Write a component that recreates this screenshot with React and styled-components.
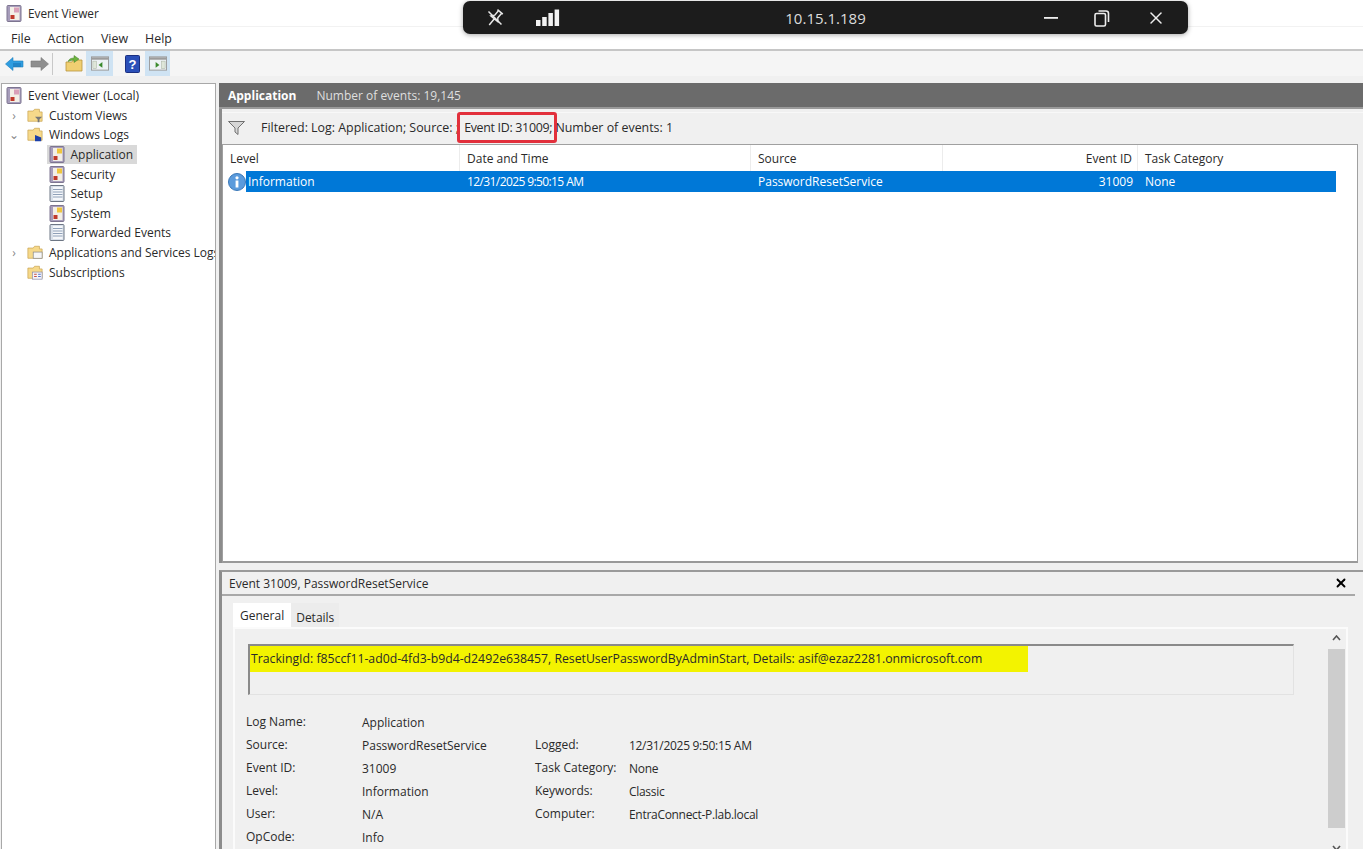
import React from "react";
import styled, { createGlobalStyle } from "styled-components";
import { X } from "lucide-react";

const GlobalStyle = createGlobalStyle`
  html, body { margin: 0; padding: 0; background: #f0f0f0; }
  body { font-family: "Open Sans", "Noto Sans", "Liberation Sans", sans-serif; font-size: 12px; color: #2a2a2a; }
  * { box-sizing: border-box; }
`;

const Window = styled.div`
  position: relative;
  width: 1363px;
  height: 849px;
  overflow: hidden;
  display: flex;
  flex-direction: column;
  background: #f0f0f0;
`;

const TitleBar = styled.div`
  height: 26px;
  background: #fff;
  display: flex;
  align-items: center;
  gap: 6px;
  padding-left: 6px;
  font-size: 11.8px;
`;

const MenuBar = styled.div`
  height: 25px;
  background: #fff;
  border-top: 1px solid #f2f2f2;
  border-bottom: 2px solid #c6c6c6;
  display: flex;
  align-items: center;
  padding-left: 11px;
  gap: 17px;
`;

const MenuItem = styled.span`
  font-size: 12.4px;
`;

const ToolBar = styled.div`
  height: 25px;
  background: #f5f5f5;
  display: flex;
  align-items: center;
  padding-left: 5px;
`;

const ToolButton = styled.div`
  width: ${({ $w }) => $w || 24}px;
  height: 25px;
  margin-right: ${({ $gap }) => $gap || 0}px;
  display: flex;
  align-items: center;
  justify-content: center;
  background: ${({ $on }) => ($on ? "#cfe3f3" : "transparent")};
`;

const ToolSep = styled.div`
  width: 1px;
  height: 22px;
  background: #c8c8c8;
  margin: 0 8px 0 3px;
`;

const ConnectionBar = styled.div`
  position: absolute;
  left: 463px;
  top: 1px;
  width: 725px;
  height: 33px;
  background: #1c1c1c;
  border-radius: 7px;
  box-shadow: 0 1px 5px rgba(0, 0, 0, 0.35);
  color: #e8e8e8;
  display: grid;
  grid-template-columns: 1fr auto 1fr;
  align-items: center;
`;

const ConnGroup = styled.div`
  display: flex;
  align-items: center;
  padding-left: ${({ $left }) => $left || 0}px;
  justify-content: ${({ $end }) => ($end ? "flex-end" : "flex-start")};
  padding-right: ${({ $right }) => $right || 0}px;
  gap: ${({ $gap }) => $gap}px;
`;

const ConnAddress = styled.span`
  font-size: 15px;
  color: #dcdcdc;
`;

const Main = styled.div`
  flex: 1;
  min-height: 0;
  margin-top: 7px;
  display: flex;
  gap: 3px;
  padding-left: 1px;
`;

const TreePane = styled.div`
  width: 215px;
  background: #fff;
  border: 1px solid #a8a8a8;
  border-bottom: none;
  padding-top: 2px;
  overflow: hidden;
`;

const TreeRow = styled.div`
  height: 19.6px;
  display: flex;
  align-items: center;
  white-space: nowrap;
  padding-left: ${({ $level }) => 4 + $level * 19.5}px;
  font-size: 12px;
`;

const Twisty = styled.span`
  width: 21px;
  flex: none;
  color: #8a8a8a;
  font-size: 12px;
  display: flex;
  justify-content: center;
  padding-right: 5px;
`;

const NodeIcon = styled.span`
  display: flex;
  flex: none;
  margin-right: 6px;
`;

const NodeLabel = styled.span`
  display: flex;
  align-items: center;
  height: 19px;
  padding-right: 3px;
`;

const SelectedNode = styled.div`
  display: flex;
  align-items: center;
  height: 19.6px;
  background: ${({ $on }) => ($on ? "#d9d9d9" : "transparent")};
  padding: 0 1px 0 2px;
`;

const ContentPane = styled.div`
  width: 1144px;
  display: flex;
  flex-direction: column;
`;

const LogHeader = styled.div`
  height: 26px;
  background: #6b6b6b;
  border-bottom: 2px solid #9a9a9a;
  display: flex;
  align-items: center;
  padding-left: 9px;
  gap: 20px;
  color: #dfdfdf;
  font-size: 12px;
`;

const LogTitle = styled.b`
  color: #fff;
  font-weight: 700;
`;

const ListArea = styled.div`
  height: 454px;
  border-left: 3px solid #8c8c8c;
  display: flex;
  flex-direction: column;
`;

const FilterBar = styled.div`
  height: 30px;
  margin: 3px 0 2px;
  display: flex;
  align-items: center;
  padding-left: 6px;
  border-top: 1px solid #f8f8f8;
`;

const FilterText = styled.span`
  margin-left: 16px;
  white-space: nowrap;
  font-size: 12.4px;
`;

const Highlighted = styled.span`
  position: relative;
  margin-left: 2px;
  letter-spacing: -0.3px;
  &::after {
    content: "";
    position: absolute;
    left: -7px;
    right: -5px;
    top: -7px;
    bottom: -7px;
    border: 3px solid #e2303c;
    border-radius: 3px;
  }
`;

const Table = styled.div`
  flex: 1;
  background: #fff;
  border: 1px solid #a0a0a0;
  border-bottom: 2px solid #999;
  margin-right: 5px;
  position: relative;
`;

const TableRow = styled.div`
  height: ${({ $h }) => $h}px;
  display: grid;
  grid-template-columns: 237px 291px 192px 195px 198px;
  align-items: center;
  width: 1113px;
  color: ${({ $selected }) => ($selected ? "#fff" : "#2a2a2a")};
  background: ${({ $selected }) => ($selected ? "linear-gradient(90deg, transparent 23px, #0078d7 23px)" : "transparent")};
`;

const Cell = styled.span`
  padding-left: ${({ $pad }) => $pad ?? 7}px;
  padding-right: ${({ $right }) => ($right ? 5 : 0)}px;
  display: flex;
  align-items: center;
  justify-content: ${({ $right }) => ($right ? "flex-end" : "flex-start")};
  height: 100%;
  letter-spacing: ${({ $narrow }) => ($narrow ? "-0.6px" : "0")};
  border-right: ${({ $sep }) => ($sep ? "1px solid #ececec" : "none")};
`;

const StatusIcon = styled.span`
  display: flex;
  margin-right: 2px;
`;

const DetailPane = styled.div`
  flex: 1;
  min-height: 0;
  margin-top: 7px;
  border-left: 3px solid #8c8c8c;
  border-top: 2px solid #9a9a9a;
  overflow: hidden;
`;

const DetailTitle = styled.div`
  height: 24px;
  margin-right: 8px;
  display: flex;
  align-items: center;
  justify-content: space-between;
  padding: 0 7px;
  border-bottom: 2px solid #a8a8a8;
`;

const CloseGlyph = styled.span`
  display: flex;
  color: #000;
`;

const TabStrip = styled.div`
  display: flex;
  align-items: flex-end;
  height: 24px;
  margin: 7px 0 0 11px;
`;

const Tab = styled.div`
  height: 24px;
  padding: ${({ $active }) => ($active ? "0 7px" : "5px 5px 0")};
  display: flex;
  align-items: center;
  background: ${({ $active }) => ($active ? "#fff" : "#ececec")};
`;

const TabBody = styled.div`
  margin: 0 15px 0 11px;
  height: 240px;
  border: 2px solid #fbfbfb;
  border-bottom: none;
  display: flex;
`;

const TabContent = styled.div`
  width: 1092px;
  padding: 15px 0 0 13px;
`;

const MessageBox = styled.div`
  width: 1046px;
  height: 51px;
  border: 1px solid #e2e2e2;
  border-top: 2px solid #8a8a8a;
  border-left: 2px solid #8a8a8a;
`;

const MessageLine = styled.div`
  width: 778px;
  height: 26px;
  background: #f3f300;
  padding: 0 0 2px 1px;
  display: flex;
  align-items: center;
  white-space: nowrap;
  font-size: 12.25px;
`;

const InfoGrid = styled.div`
  display: grid;
  margin: 16px 0 0 -2px;
  grid-template-columns: 116px 173px 94px 1fr;
  grid-auto-rows: 23px;
  align-items: center;
`;

const InfoLabel = styled.span`
  position: relative;
  top: -1px;
`;

const InfoValue = styled.span`
  letter-spacing: ${({ $narrow }) => ($narrow ? "-0.3px" : "0")};
`;

const ScrollBar = styled.div`
  width: 18px;
  display: flex;
  flex-direction: column;
  align-items: center;
  padding-top: 6px;
`;

const ScrollThumb = styled.div`
  width: 17px;
  height: 179px;
  background: #cdcdcd;
  margin: 8px 0 17px;
`;

const Arrow = styled.svg`
  flex: none;
`;

const LogIcon = ({ color }) => (
  <svg width="16" height="17" viewBox="0 0 16 17">
    <rect x="1" y="0.5" width="14" height="16" rx="1" fill="#a79dbb" stroke="#7d7590" />
    <rect x="4" y="2" width="9.5" height="13" fill="#f3efe6" />
    <rect x="8" y="2.5" width="5" height="5" fill={color || "#f0c63c"} />
    <rect x="4.5" y="10" width="4" height="4" fill="#c0392b" />
  </svg>
);

const PageIcon = () => (
  <svg width="16" height="17" viewBox="0 0 16 17">
    <rect x="1" y="0.5" width="14" height="16" rx="1" fill="#d8dfe9" stroke="#6d7684" />
    <rect x="4" y="2" width="9.5" height="13" fill="#f5f7fa" />
    <path d="M4 4.5h9.5M4 7h9.5M4 9.5h9.5M4 12h9.5" stroke="#8fa0b8" strokeWidth="1" />
  </svg>
);

const FolderIcon = ({ badge }) => (
  <svg width="16" height="17" viewBox="0 0 18 17">
    <path d="M1 3.5h6l1.5-2H14v3H17V15H1z" fill="#f6d98a" stroke="#c9a452" strokeWidth="0.8" />
    {badge === "funnel" && <path d="M9 10h8l-3 3v3h-2v-3z" fill="#777" />}
    {badge === "windows" && <path d="M9 9l7 3v4H9z" fill="#1b3fa8" />}
    {badge === "page" && <rect x="7" y="8" width="10" height="7" fill="#f6f6f6" stroke="#888" strokeWidth="0.8" />}
    {badge === "subs" && (
      <g>
        <rect x="6" y="8" width="11" height="8" fill="#f4f4fa" stroke="#8c8ca8" strokeWidth="0.8" />
        <path d="M8 10.5h3M8 13h3" stroke="#c0392b" />
        <path d="M12.5 10.5h3M12.5 13h3" stroke="#3c64c8" />
      </g>
    )}
  </svg>
);

const BackIcon = () => (
  <svg width="19" height="16" viewBox="0 0 19 16">
    <path d="M0.5 8L8 1.5V5h10v6H8v3.5z" fill="#2f9de0" stroke="#1f7fbe" strokeWidth="0.6" />
    <path d="M8 7h8v4H8z" fill="#176fb0" opacity="0.5" />
  </svg>
);

const ForwardIcon = () => (
  <svg width="19" height="16" viewBox="0 0 19 16">
    <path d="M18.5 8L11 1.5V5H1v6h10v3.5z" fill="#8e8e8e" stroke="#7a7a7a" strokeWidth="0.6" />
  </svg>
);

const UpFolderIcon = () => (
  <svg width="18" height="17" viewBox="0 0 18 17">
    <path d="M1 7h6l1-2h9v11H1z" fill="#f0cf72" stroke="#b8963e" strokeWidth="0.8" />
    <path d="M3 6.5C4 4 6 3 9 3V0.5L14 4 9 7.5V5C7 5 5 5.5 3 6.5z" fill="#6db33f" stroke="#44802a" strokeWidth="0.5" />
  </svg>
);

const PaneIcon = ({ flip }) => (
  <svg width="18" height="15" viewBox="0 0 19 15">
    <rect x="0.5" y="0.5" width="18" height="14" fill="#eef2f5" stroke="#9a9a9a" />
    <rect x="1" y="1" width="17" height="2.5" fill="#9c9c9c" />
    <rect x={flip ? 13 : 2} y="5" width="4" height="8" fill="#dfe6d9" stroke="#a5b0a0" strokeWidth="0.5" />
    <path d={flip ? "M7 6v6l4-3z" : "M12 6v6l-4-3z"} fill="#3c8a2e" />
  </svg>
);

const HelpIcon = () => (
  <svg width="15" height="18" viewBox="0 0 15 18">
    <rect x="0.5" y="0.5" width="14" height="17" rx="1" fill="#2a4fb8" stroke="#1a2f80" />
    <text x="7.5" y="14" textAnchor="middle" fontSize="13" fontWeight="700" fontFamily="Liberation Sans" fill="#fff">?</text>
  </svg>
);

const FunnelIcon = () => (
  <svg width="17" height="14" viewBox="0 0 17 14">
    <path d="M0.5 0.5h16L10 7v6.5L7 11V7z" fill="#d6d6d6" stroke="#707070" />
  </svg>
);

const InfoIcon = () => (
  <svg width="18" height="18" viewBox="0 0 18 18">
    <circle cx="9" cy="9" r="8.5" fill="#5b9bdc" stroke="#3a78b8" />
    <rect x="7.6" y="7.5" width="2.8" height="7" fill="#fff" />
    <circle cx="9" cy="4.8" r="1.6" fill="#fff" />
  </svg>
);

const PinOffIcon = () => (
  <svg width="20" height="20" viewBox="0 0 20 20" fill="none" stroke="#e8e8e8" strokeWidth="1.5">
    <g transform="rotate(40 10 10)">
      <path d="M6.5 2h7M8 2v6l-2.5 3h9L12 8V2M10 11v8" />
    </g>
    <path d="M3.5 3.5l13 13" />
  </svg>
);

const SignalIcon = () => (
  <svg width="24" height="18" viewBox="0 0 24 18">
    <rect x="0" y="11" width="4.5" height="6" fill="#f2f2f2" />
    <rect x="6.2" y="8" width="4.5" height="9" fill="#f2f2f2" />
    <rect x="12.4" y="4" width="4.5" height="13" fill="#f2f2f2" />
    <rect x="18.6" y="0.5" width="4.5" height="16.5" fill="#f2f2f2" />
  </svg>
);

const RestoreIcon = () => (
  <svg width="16" height="18" viewBox="0 0 16 18" fill="none" stroke="#eee" strokeWidth="1.6">
    <rect x="1" y="4.5" width="10.5" height="12.5" rx="1.5" />
    <path d="M4.5 2h7.5a2.5 2.5 0 0 1 2.5 2.5V13" />
  </svg>
);

const MinimizeIcon = () => (
  <svg width="14" height="4" viewBox="0 0 14 4">
    <rect x="0" y="1" width="14" height="1.8" fill="#eee" />
  </svg>
);

const Chevron = ({ down }) => (
  <Arrow width="9" height="6" viewBox="0 0 9 6">
    <path d={down ? "M1 1l3.5 4L8 1" : "M1 5l3.5-4L8 5"} fill="none" stroke="#555" strokeWidth="1.6" />
  </Arrow>
);

const treeRows = [
  { level: 0, label: "Event Viewer (Local)", icon: <LogIcon color="#d9a0b8" />, plain: true },
  { level: 0, label: "Custom Views", icon: <FolderIcon badge="funnel" />, twisty: "›" },
  { level: 0, label: "Windows Logs", icon: <FolderIcon badge="windows" />, twisty: "⌄" },
  { level: 1, label: "Application", icon: <LogIcon />, selected: true },
  { level: 1, label: "Security", icon: <LogIcon /> },
  { level: 1, label: "Setup", icon: <PageIcon /> },
  { level: 1, label: "System", icon: <LogIcon /> },
  { level: 1, label: "Forwarded Events", icon: <PageIcon /> },
  { level: 0, label: "Applications and Services Logs", icon: <FolderIcon badge="page" />, twisty: "›" },
  { level: 0, label: "Subscriptions", icon: <FolderIcon badge="subs" />, twisty: " " },
];

const eventInfo = [
  ["Log Name:", "Application", "", ""],
  ["Source:", "PasswordResetService", "Logged:", "12/31/2025 9:50:15 AM"],
  ["Event ID:", "31009", "Task Category:", "None"],
  ["Level:", "Information", "Keywords:", "Classic"],
  ["User:", "N/A", "Computer:", "EntraConnect-P.lab.local"],
  ["OpCode:", "Info", "", ""],
];

export default function App() {
  return (
    <Window>
      <GlobalStyle />
      <TitleBar>
        <LogIcon color="#d9a0b8" />
        Event Viewer
      </TitleBar>
      <MenuBar>
        {["File", "Action", "View", "Help"].map(m => (
          <MenuItem key={m}>{m}</MenuItem>
        ))}
      </MenuBar>
      <ToolBar>
        <ToolButton $w={19} $gap={6}><BackIcon /></ToolButton>
        <ToolButton $w={19}><ForwardIcon /></ToolButton>
        <ToolSep />
        <ToolButton $w={25}><UpFolderIcon /></ToolButton>
        <ToolButton $w={27} $gap={7} $on><PaneIcon /></ToolButton>
        <ToolButton $w={24} $gap={1}><HelpIcon /></ToolButton>
        <ToolButton $w={25} $on><PaneIcon flip /></ToolButton>
      </ToolBar>

      <Main>
        <TreePane>
          {treeRows.map(row => (
            <TreeRow key={row.label} $level={row.level}>
              {row.plain ? null : row.level === 0 ? <Twisty>{row.twisty}</Twisty> : <Twisty />}
              {row.level === 1 ? (
                <SelectedNode $on={row.selected}>
                  <NodeIcon>{row.icon}</NodeIcon>
                  <NodeLabel>{row.label}</NodeLabel>
                </SelectedNode>
              ) : (
                <>
                  <NodeIcon>{row.icon}</NodeIcon>
                  <NodeLabel>{row.label}</NodeLabel>
                </>
              )}
            </TreeRow>
          ))}
        </TreePane>

        <ContentPane>
          <LogHeader>
            <LogTitle>Application</LogTitle>
            Number of events: 19,145
          </LogHeader>
          <ListArea>
            <FilterBar>
              <FunnelIcon />
              <FilterText>
                Filtered: Log: Application; Source: ;{" "}
                <Highlighted>Event ID: 31009;</Highlighted> Number of events: 1
              </FilterText>
            </FilterBar>
            <Table>
              <TableRow $h={26}>
                <Cell $sep>Level</Cell>
                <Cell $sep>Date and Time</Cell>
                <Cell $sep>Source</Cell>
                <Cell $sep $right>Event ID</Cell>
                <Cell>Task Category</Cell>
              </TableRow>
              <TableRow $h={21} $selected>
                <Cell $pad={5}>
                  <StatusIcon><InfoIcon /></StatusIcon>
                  Information
                </Cell>
                <Cell $narrow>12/31/2025 9:50:15 AM</Cell>
                <Cell>PasswordResetService</Cell>
                <Cell $right>31009</Cell>
                <Cell>None</Cell>
              </TableRow>
            </Table>
          </ListArea>

          <DetailPane>
            <DetailTitle>
              Event 31009, PasswordResetService
              <CloseGlyph><X size={14} strokeWidth={3.2} /></CloseGlyph>
            </DetailTitle>
            <TabStrip>
              <Tab $active>General</Tab>
              <Tab>Details</Tab>
            </TabStrip>
            <TabBody>
              <TabContent>
                <MessageBox>
                  <MessageLine>
                    TrackingId: f85ccf11-ad0d-4fd3-b9d4-d2492e638457, ResetUserPasswordByAdminStart, Details: asif@ezaz2281.onmicrosoft.com
                  </MessageLine>
                </MessageBox>
                <InfoGrid>
                  {eventInfo.map(([a, b, c, d]) => (
                    <React.Fragment key={a}>
                      <InfoLabel>{a}</InfoLabel>
                      <InfoValue>{b}</InfoValue>
                      <InfoLabel>{c}</InfoLabel>
                      <InfoValue $narrow>{d}</InfoValue>
                    </React.Fragment>
                  ))}
                </InfoGrid>
              </TabContent>
              <ScrollBar>
                <Chevron />
                <ScrollThumb />
                <Chevron down />
              </ScrollBar>
            </TabBody>
          </DetailPane>
        </ContentPane>
      </Main>

      <ConnectionBar>
        <ConnGroup $left={22} $gap={31}>
          <PinOffIcon />
          <SignalIcon />
        </ConnGroup>
        <ConnAddress>10.15.1.189</ConnAddress>
        <ConnGroup $end $right={22} $gap={36}>
          <MinimizeIcon />
          <RestoreIcon />
          <X size={20} color="#eee" strokeWidth={1.8} />
        </ConnGroup>
      </ConnectionBar>
    </Window>
  );
}
